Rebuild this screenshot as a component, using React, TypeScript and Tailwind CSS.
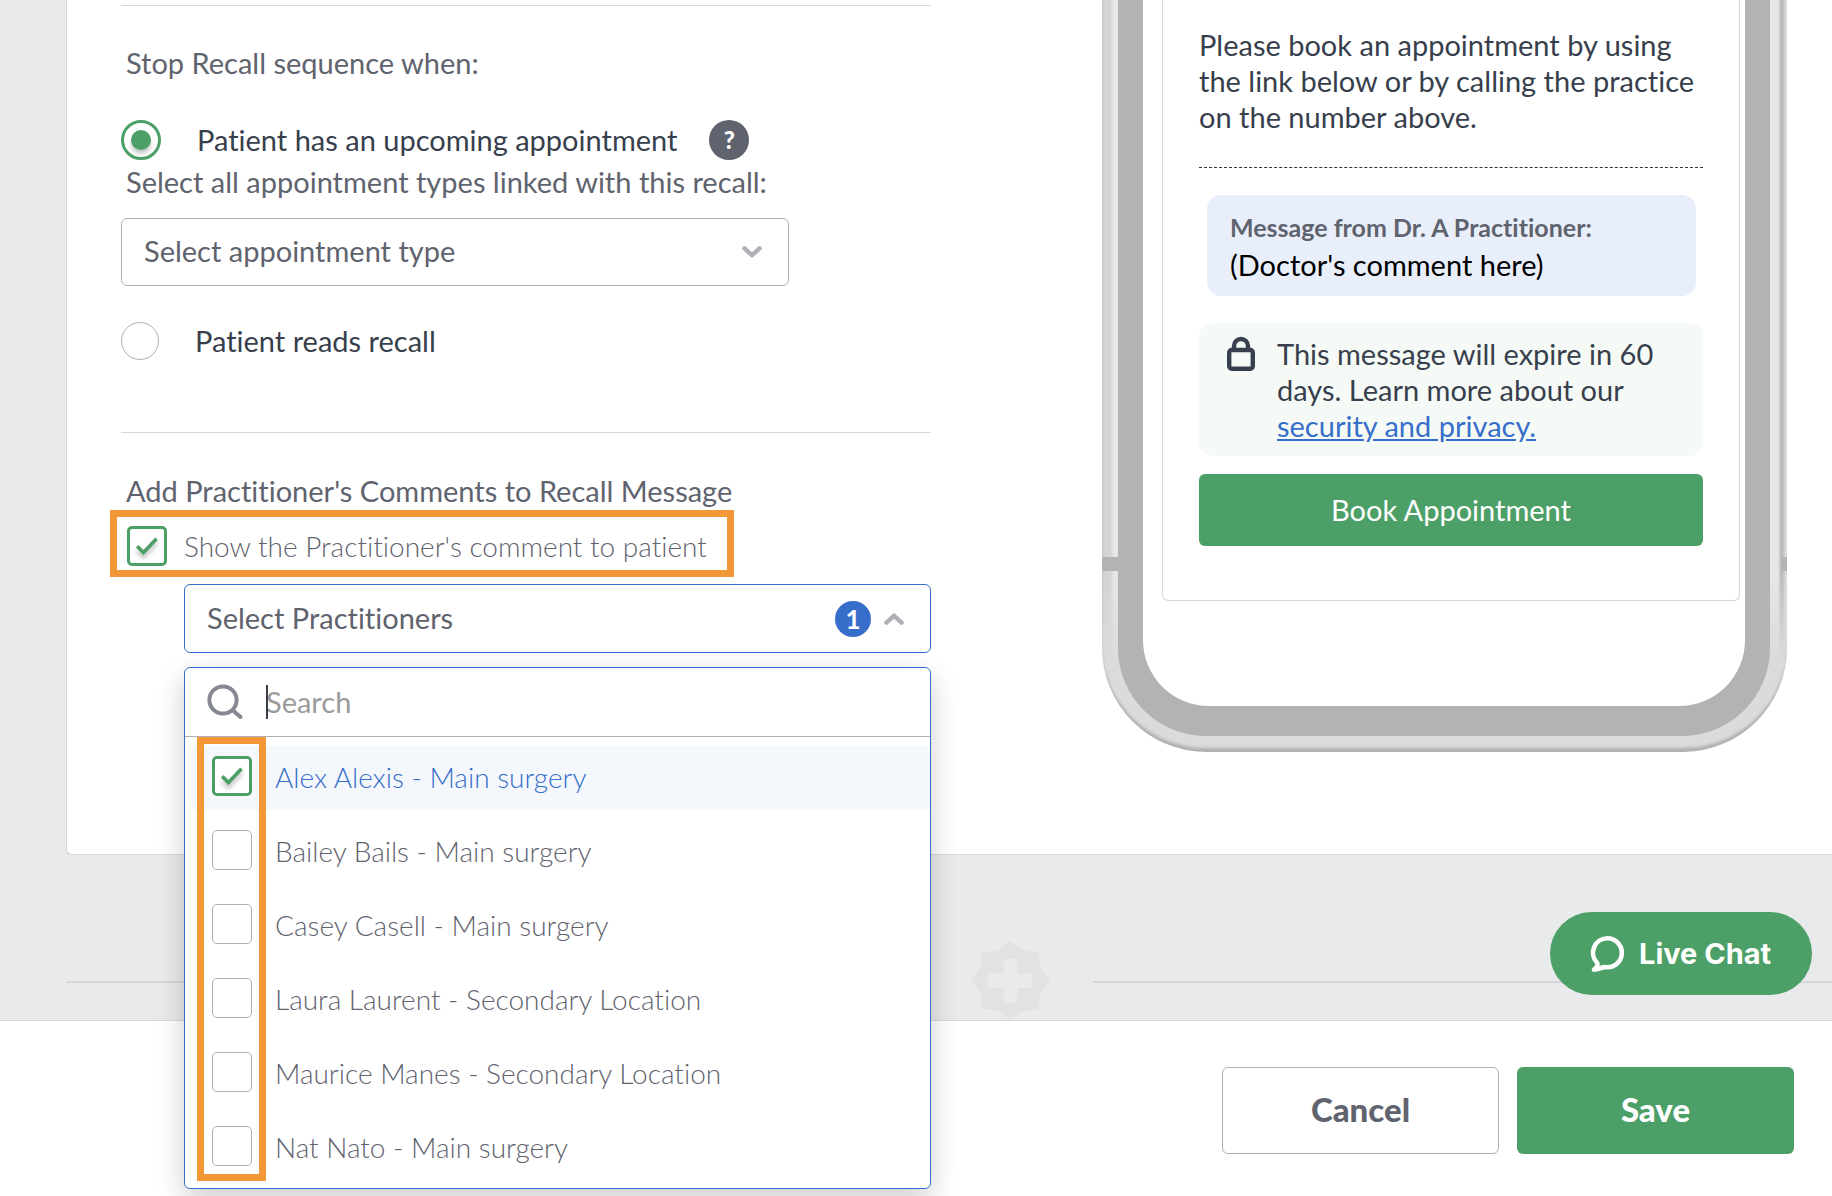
import React, { useState, FC } from "react"
import clsx from "clsx"

const PRACTITIONERS = [
  "Alex Alexis - Main surgery",
  "Bailey Bails - Main surgery",
  "Casey Casell - Main surgery",
  "Laura Laurent - Secondary Location",
  "Maurice Manes - Secondary Location",
  "Nat Nato - Main surgery",
]

const Chevron: FC<{ up?: boolean; className?: string }> = ({ up, className }) => (
  <svg className={className} width="20" height="12" viewBox="0 0 20 12" fill="none" stroke="#b0b1b8" strokeWidth="4.4" strokeLinecap="round">
    <path d={up ? "M2.4 9.6 10 2.8l7.6 6.8" : "M2.4 2.4 10 9.2l7.6-6.8"} />
  </svg>
)

type CheckboxProps = {
  id: string
  checked: boolean
  onChange: () => void
}

const Checkbox: FC<CheckboxProps> = ({ id, checked, onChange }) => (
  <span className="relative size-10 shrink-0">
    <input
      id={id}
      type="checkbox"
      checked={checked}
      onChange={onChange}
      className="block size-10 appearance-none rounded-[5px] border border-[#b0b1b8] bg-white checked:border-3 checked:border-[#4d9f68]"
    />
    {checked && (
      <svg className="pointer-events-none absolute inset-0 drop-shadow-[0_4px_2px_rgba(0,0,0,0.25)]" viewBox="0 0 40 40" fill="none" stroke="#4d9f68" strokeWidth="3.6">
        <path d="M10.2 20.2 16.4 26.6 29.6 12.8" />
      </svg>
    )}
  </span>
)

type RadioProps = {
  id: string
  label: string
  checked: boolean
  onChange: () => void
}

const Radio: FC<RadioProps> = ({ id, label, checked, onChange }) => (
  <>
    <span className={clsx("relative shrink-0", checked ? "size-10" : "size-[38px]")}>
      <input
        id={id}
        type="radio"
        name="stop-when"
        checked={checked}
        onChange={onChange}
        className="block size-full appearance-none rounded-full border border-[#b0b1b8] bg-white checked:border-3 checked:border-[#4d9f68]"
      />
      {checked && (
        <span className="pointer-events-none absolute inset-2.5 rounded-full bg-[#4d9f68] shadow-[0_4px_4px_rgba(0,0,0,0.22)]" />
      )}
    </span>
    <label htmlFor={id} className="ml-9 text-[#383f4c]">
      {label}
    </label>
  </>
)

const PractitionerSelect: FC = () => {
  const [open, setOpen] = useState(true)
  const [query, setQuery] = useState("")
  const [selected, setSelected] = useState([PRACTITIONERS[0]])

  const toggle = (name: string) =>
    setSelected(selected.includes(name) ? selected.filter((n) => n !== name) : [...selected, name])

  return (
    <div className="relative mt-[18px] ml-[63px]">
      <button
        type="button"
        aria-expanded={open}
        onClick={() => setOpen(!open)}
        className="flex h-[69px] w-full items-center rounded-md border border-[#376eca] bg-white pr-[26px] pl-[22px]"
      >
        <span className="pb-0.5">Select Practitioners</span>
        <span className="mr-[13px] ml-auto flex size-9 items-center justify-center rounded-full bg-[#376eca] text-[26px] font-bold text-white">
          {selected.length}
        </span>
        <Chevron up={open} />
      </button>
      {open && (
        <div className="absolute inset-x-0 top-full z-10 mt-3.5 rounded-md border border-[#376eca] bg-white pb-2 shadow-[0_10px_28px_rgba(0,0,0,0.2)]">
          <div className="flex h-[69px] items-center border-b border-[#b0b1b8] pl-[22px]">
            <svg width="36" height="36" viewBox="0 0 36 36" fill="none" stroke="#868991" strokeWidth="4">
              <circle cx="16" cy="16" r="13.6" />
              <path d="M26 26.5 33.5 33" strokeLinecap="round" />
            </svg>
            <div className="relative ml-[23px] flex-1">
              <input
                type="text"
                aria-label="Search"
                placeholder="Search"
                value={query}
                onChange={(e) => setQuery(e.target.value)}
                className="block h-[34px] w-full outline-none placeholder:text-[#9b9b9b]"
              />
              {!query && <span className="pointer-events-none absolute inset-y-0 left-0 w-0.5 bg-[#383f4c]" />}
            </div>
          </div>
          <ul className="flex flex-col gap-2.5 pt-[9px] pl-1.5">
            {PRACTITIONERS.filter((n) => n.toLowerCase().includes(query.toLowerCase())).map((name) => {
              const id = name.split(" ")[0]
              const checked = selected.includes(name)
              return (
                <li
                  key={name}
                  className={clsx("flex h-16 items-start rounded-l-md pt-2.5 pl-[21px]", checked ? "bg-[#f4f8fd] text-[#376eca]" : "")}
                >
                  <Checkbox id={id} checked={checked} onChange={() => toggle(name)} />
                  <label htmlFor={id} className="ml-[23px] pt-[3px] text-[28px] leading-9 font-light">
                    {name}
                  </label>
                </li>
              )
            })}
          </ul>
          <div className="pointer-events-none absolute top-[69px] bottom-[7px] left-3 w-[69px] border-7 border-[#f29837]" />
        </div>
      )}
    </div>
  )
}

const RecallForm: FC = () => {
  const [stopWhen, setStopWhen] = useState("upcoming")
  const [showComment, setShowComment] = useState(true)

  return (
    <section className="flex-1 pt-[5px]">
      <hr className="border-[#d5d7d9]" />
      <p className="mt-[39px] ml-[5px]">Stop Recall sequence when:</p>
      <div className="mt-[39px] flex items-center">
        <Radio
          id="upcoming"
          label="Patient has an upcoming appointment"
          checked={stopWhen === "upcoming"}
          onChange={() => setStopWhen("upcoming")}
        />
        <button type="button" aria-label="Help" className="ml-8 flex size-10 items-center justify-center rounded-full bg-[#5f636e] text-2xl font-black text-white">
          ?
        </button>
      </div>
      <label htmlFor="appointment-type" className="mt-1 ml-[5px] block">
        Select all appointment types linked with this recall:
      </label>
      <div className="relative mt-[18px] w-[668px]">
        <select id="appointment-type" className="block h-[68px] w-full appearance-none rounded-md border border-[#b0b1b8] bg-white pb-0.5 pl-[22px]">
          <option>Select appointment type</option>
        </select>
        <Chevron className="pointer-events-none absolute top-7 right-[27px]" />
      </div>
      <div className="mt-9 flex items-center">
        <Radio
          id="reads"
          label="Patient reads recall"
          checked={stopWhen === "reads"}
          onChange={() => setStopWhen("reads")}
        />
      </div>
      <hr className="mt-[72px] border-[#d5d7d9]" />
      <h2 className="mt-10 ml-[5px]">Add Practitioner's Comments to Recall Message</h2>
      <div className="relative mt-[17px] ml-1.5 flex w-fit items-center">
        <Checkbox id="show-comment" checked={showComment} onChange={() => setShowComment(!showComment)} />
        <label htmlFor="show-comment" className="ml-[17px] text-[28px] leading-9 font-light">
          Show the Practitioner's comment to patient
        </label>
        <div className="pointer-events-none absolute -top-4 -right-[27px] -bottom-[11px] -left-[17px] border-7 border-[#f29837]" />
      </div>
      <PractitionerSelect />
    </section>
  )
}

const PhonePreview: FC = () => (
  <section className="relative h-[752px] w-[685px] shrink-0 rounded-b-[104px] bg-[linear-gradient(to_bottom,transparent_570px,#dadbdb_660px),linear-gradient(to_right,#c9caca_0px,#d3d4d4_3px,#d3d4d4_8px,#e7e7e7_12px,#e7e7e7_676px,#b9baba_679px,#bdbebe_681px,#e0e0e0_684px)] pr-[17px] pb-4 pl-4 shadow-[inset_0_-5px_3px_-1px_#b0b2b1]">
    <div className="absolute top-[557px] left-0 h-3.5 w-4 bg-[#b2b4b3]" />
    <div className="absolute top-[557px] right-0 h-3.5 w-1.5 bg-[#b2b4b3]" />
    <div className="h-full rounded-b-[88px] bg-[#b2b4b3] px-[25px] pb-[30px]">
      <div className="h-full rounded-b-[66px] bg-white pr-[5px] pl-[19px]">
        <div className="rounded-b-md border-x border-b border-[#d5d7d9] px-9 pt-[27px] pb-[54px] text-[#383f4c]">
          <p>
            Please book an appointment by using the link below or by calling the practice on the number above.
          </p>
          <hr className="mt-8 border-dashed border-[#333333]" />
          <div className="mt-[27px] mr-[7px] ml-2 rounded-[14px] bg-[#e9effa] pt-[13px] pr-6 pb-3 pl-[23px] leading-[38px]">
            <p className="text-[25px] leading-[38px] font-bold text-[#5f636e]">Message from Dr. A Practitioner:</p>
            <p className="text-black">(Doctor's comment here)</p>
          </div>
          <div className="mt-[27px] flex gap-[22px] rounded-[14px] bg-[#f5faf7] pt-[13px] pr-4 pb-3 pl-7">
            <svg className="shrink-0" width="28" height="36" viewBox="0 0 28 36" fill="none" stroke="#383f4c" strokeWidth="4.4">
              <rect x="2.2" y="14" width="23.6" height="18.8" rx="2.500" />
              <path d="M7 14V10a7 7 0 0 1 14 0v4" />
            </svg>
            <p>
              This message will expire in 60 days. Learn more about our{" "}
              <a href="#privacy" className="text-[#376eca] underline">
                security and privacy.
              </a>
            </p>
          </div>
          <button type="button" className="mt-[18px] h-[72px] w-full rounded-md bg-[#4d9f68] text-white">
            Book Appointment
          </button>
        </div>
      </div>
    </div>
  </section>
)

const App: FC = () => {
  return (
    <div className="min-h-screen overflow-hidden bg-[#e9eaeb] font-[Lato,sans-serif] text-[29px] leading-9 text-[#5f636e] [font-variant-ligatures:none]">
      <main>
        <div className="ml-[66px] flex gap-[171px] rounded-bl-md border-b border-l border-[#d5d7d9] bg-white pr-[45px] pb-[102px] pl-[54px]">
          <RecallForm />
          <PhonePreview />
        </div>
        <div className="-mr-[123px] flex items-center gap-[43px] pt-[85px] pl-[66px]">
          <div className="h-1.5 flex-1 border-b-2 border-[#d5d7d9]" />
          <svg width="79" height="80" viewBox="0 0 79 80">
            <path
              fill="#e2e2e2"
              d="M39.5 1 52 10.500 67.500 12.500 69.500 28 79 40.500 69.500 53 67.500 68.500 52 71 39.500 80 26.500 71 11.500 68.500 9.500 53 0 40.500 9.500 28 11.500 12.500 26.500 10.500Z"
            />
            <path fill="#e9eaeb" d="M32.500 19h14v14.500h15v14.500h-15v15h-14v-15h-16v-14.500h16z" />
          </svg>
          <div className="h-1.5 flex-1 border-b-2 border-[#d5d7d9]" />
        </div>
      </main>
      <footer className="flex justify-end gap-[18px] border-t border-[#d5d7d9] bg-white pt-[46px] pr-[38px] pb-[42px] text-[33px] font-black">
        <button type="button" className="h-[87px] w-[277px] rounded-md border border-[#b0b1b8] bg-white pb-1">
          Cancel
        </button>
        <button type="button" className="h-[87px] w-[277px] rounded-md bg-[#4d9f68] pb-1 text-white">
          Save
        </button>
      </footer>
      <button
        type="button"
        className="fixed right-5 bottom-[201px] flex h-[83px] w-[262px] items-center rounded-full bg-[#4d9f68] pl-10 font-[Inter,sans-serif] text-[29px] font-bold text-white"
      >
        <svg className="mr-[13px]" width="36" height="38" viewBox="0 0 36 38" fill="none" stroke="#fff" strokeWidth="4.6" strokeLinejoin="round">
          <path d="M18 3.300a14.500 14.500 0 1 1-3.500 28.700c-3 1-6 2-10.500 2.600 3-2.200 4.200-4.300 3.200-6.600A14.500 14.500 0 0 1 18 3.300Z" />
        </svg>
        Live Chat
      </button>
    </div>
  )
}

export default App
